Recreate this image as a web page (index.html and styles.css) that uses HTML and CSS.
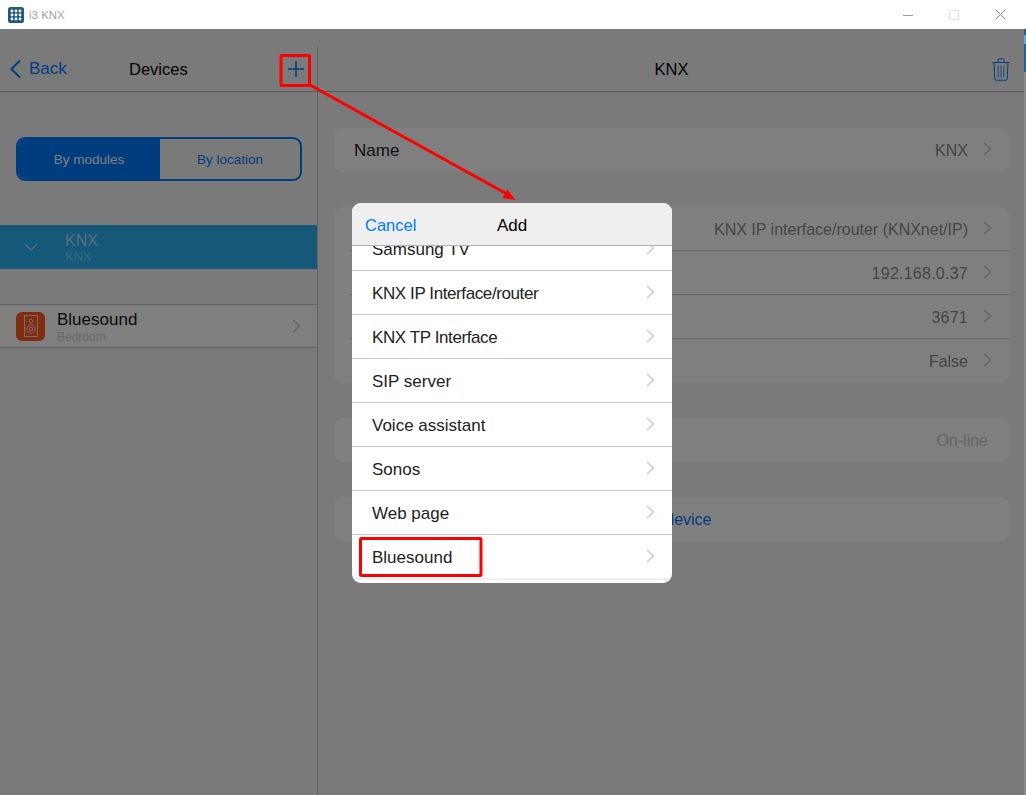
FILE: index.html
```html
<!DOCTYPE html>
<html lang="en">
<head>
<meta charset="utf-8">
<title>i3 KNX</title>
<link rel="stylesheet" href="styles.css">
</head>
<body>
<header class="titlebar">
  <svg class="app-icon" width="16" height="16" viewBox="0 0 16 16"><rect width="16" height="16" rx="2.5" fill="#1f5a86"/><g fill="#fff"><circle cx="4" cy="4" r="1.4"/><circle cx="8" cy="4" r="1.4"/><circle cx="12" cy="4" r="1.4"/><circle cx="4" cy="8" r="1.4"/><circle cx="8" cy="8" r="1.4"/><circle cx="12" cy="8" r="1.4"/><circle cx="4" cy="12" r="1.4"/><circle cx="8" cy="12" r="1.4"/><circle cx="12" cy="12" r="1.4"/></g></svg>
  <span class="app-name">i3 KNX</span>
  <div class="win-controls">
    <svg width="10" height="10" viewBox="0 0 10 10"><path d="M0 5.5H10" stroke="#9a9a9a" stroke-width="1"/></svg>
    <svg width="10" height="10" viewBox="0 0 10 10"><rect x=".5" y=".5" width="9" height="9" fill="none" stroke="#e2e2e2"/></svg>
    <svg width="11" height="11" viewBox="0 0 11 11"><path d="M.5 .5L10.5 10.5M10.5 .5L.5 10.5" stroke="#8a8a8a" stroke-width="1" fill="none"/></svg>
  </div>
</header>

<div class="app">
  <aside class="sidebar">
    <div class="side-head">
      <a class="back"><svg width="13" height="20" viewBox="0 0 13 20"><path d="M11 1.500L2.500 10L11 18.500" fill="none" stroke="#007aff" stroke-width="2"/></svg>Back</a>
      <h2 class="side-title">Devices</h2>
      <svg class="plus" width="16" height="16" viewBox="0 0 16 16"><path d="M8 0V16M0 8H16" stroke="#007aff" stroke-width="1.600"/></svg>
    </div>
    <div class="segment">
      <span class="seg seg-on">By modules</span>
      <span class="seg">By location</span>
    </div>
    <div class="knx-row">
      <svg width="14" height="8" viewBox="0 0 14 8"><path d="M1 1L7 7L13 1" fill="none" stroke="#fff" stroke-opacity=".55" stroke-width="1.400"/></svg>
      <div class="stack">
        <span class="knx-name">KNX</span>
        <span class="knx-sub">KNX</span>
      </div>
    </div>
    <div class="blue-row">
      <span class="tile">
        <svg width="14" height="22" viewBox="0 0 14 22" fill="none" stroke="#fff" stroke-opacity=".75"><rect x=".5" y=".5" width="13" height="21"/><circle cx="7" cy="6" r="1.800"/><circle cx="7" cy="14" r="4.200"/><circle cx="7" cy="14" r="1.800"/></svg>
      </span>
      <div class="stack">
        <span class="blue-name">Bluesound</span>
        <span class="blue-sub">Bedroom</span>
      </div>
      <svg class="chev chev-side" width="9" height="14" viewBox="0 0 9 14"><path d="M1 1L7.500 7L1 13"/></svg>
    </div>
  </aside>

  <main class="detail">
    <div class="detail-head">
      <h2 class="detail-title">KNX</h2>
      <svg class="trash" width="18" height="23" viewBox="0 0 18 23" fill="none" stroke="#007aff" stroke-width="1"><path d="M.5 4.500H17.500M6 4.500V2Q6 .8 7.200 .8H10.800Q12 .8 12 2V4.500M2 4.500L2.800 21Q2.900 22.200 4 22.200H14Q15.100 22.200 15.200 21L16 4.500"/><path d="M6 7.500L6.500 19.500M9 7.500V19.500M12 7.500L11.500 19.500" stroke-width="1.400" stroke-opacity=".55"/></svg>
    </div>
    <section class="card">
      <div class="row"><span>Name</span><span class="val">KNX</span><svg class="chev" width="9" height="14" viewBox="0 0 9 14"><path d="M1 1L7.500 7L1 13"/></svg></div>
    </section>
    <section class="card">
      <div class="row"><span>Type</span><span class="val">KNX IP interface/router (KNXnet/IP)</span><svg class="chev" width="9" height="14" viewBox="0 0 9 14"><path d="M1 1L7.500 7L1 13"/></svg></div>
      <div class="row"><span>IP address</span><span class="val num">192.168.0.37</span><svg class="chev" width="9" height="14" viewBox="0 0 9 14"><path d="M1 1L7.500 7L1 13"/></svg></div>
      <div class="row"><span>Port</span><span class="val num">3671</span><svg class="chev" width="9" height="14" viewBox="0 0 9 14"><path d="M1 1L7.500 7L1 13"/></svg></div>
      <div class="row"><span>NAT mode</span><span class="val">False</span><svg class="chev" width="9" height="14" viewBox="0 0 9 14"><path d="M1 1L7.500 7L1 13"/></svg></div>
    </section>
    <section class="card">
      <div class="row row-status"><span>Status</span><span class="val val-light">On-line</span></div>
    </section>
    <section class="card">
      <div class="row row-action">Test device</div>
    </section>
  </main>
</div>

<div class="scrim"></div>
<div class="window-edge"></div>

<div class="dialog">
  <div class="dialog-head">
    <span class="cancel">Cancel</span>
    <span class="dialog-title">Add</span>
  </div>
  <ul class="list">
    <li class="item"><span>Samsung TV</span><svg class="chev" width="9" height="14" viewBox="0 0 9 14"><path d="M1 1L7.500 7L1 13"/></svg></li>
    <li class="item"><span class="tight">KNX IP Interface/router</span><svg class="chev" width="9" height="14" viewBox="0 0 9 14"><path d="M1 1L7.500 7L1 13"/></svg></li>
    <li class="item"><span class="tight">KNX TP Interface</span><svg class="chev" width="9" height="14" viewBox="0 0 9 14"><path d="M1 1L7.500 7L1 13"/></svg></li>
    <li class="item"><span>SIP server</span><svg class="chev" width="9" height="14" viewBox="0 0 9 14"><path d="M1 1L7.500 7L1 13"/></svg></li>
    <li class="item"><span>Voice assistant</span><svg class="chev" width="9" height="14" viewBox="0 0 9 14"><path d="M1 1L7.500 7L1 13"/></svg></li>
    <li class="item"><span>Sonos</span><svg class="chev" width="9" height="14" viewBox="0 0 9 14"><path d="M1 1L7.500 7L1 13"/></svg></li>
    <li class="item"><span>Web page</span><svg class="chev" width="9" height="14" viewBox="0 0 9 14"><path d="M1 1L7.500 7L1 13"/></svg></li>
    <li class="item"><span>Bluesound</span><svg class="chev" width="9" height="14" viewBox="0 0 9 14"><path d="M1 1L7.500 7L1 13"/></svg></li>
  </ul>
</div>

<svg class="annotations" width="1026" height="795" viewBox="0 0 1026 795">
  <g fill="none" stroke="#f00" stroke-width="3">
    <rect x="281" y="55.500" width="28.500" height="30" rx="1"/>
    <rect x="360.500" y="538.500" width="120.500" height="37" rx="1"/>
    <path d="M310 85L506 193.500"/>
  </g>
  <path d="M515.500 200L502.500 198L507.500 189.500Z" fill="#f00"/>
</svg>
</body>
</html>
```
FILE: styles.css
```css
* { box-sizing: border-box; }
html, body { margin: 0; height: 100%; overflow: hidden; }
body {
  position: relative;
  display: flex;
  flex-direction: column;
  width: 1026px;
  height: 795px;
  font-family: "Liberation Sans", Arial, sans-serif;
  font-size: 17px;
  color: #222;
  background: #f5f5f7;
}
.titlebar {
  position: relative;
  z-index: 3;
  flex: 0 0 29px;
  display: flex;
  align-items: center;
  padding-left: 8px;
  background: #fff;
}
.app-name { margin-left: 5px; font-size: 11.500px; color: #a2a2a6; }
.win-controls {
  margin-left: auto;
  display: flex;
  align-items: center;
  gap: 36px;
  padding-right: 20px;
}
.app { flex: 1; display: flex; min-height: 0; padding-top: 17px; }
.sidebar {
  flex: 0 0 318px;
  position: relative;
  border-right: 1px solid #c8c8c8;
}
.side-head {
  height: 46px;
  display: flex;
  align-items: center;
  position: relative;
  padding-top: 1px;
  border-bottom: 1px solid #b4b4b4;
}
.back {
  margin-left: 9px;
  display: flex;
  align-items: center;
  gap: 7px;
  color: #007aff;
}
.side-title {
  position: absolute;
  left: 129px;
  margin: 0;
  font-size: 16.500px;
  font-weight: 400;
  color: #000;
}
.plus { position: absolute; left: 288px; top: 15px; }
.segment {
  display: flex;
  width: 286px;
  height: 44px;
  margin: 45px 0 0 16px;
  border: 2px solid #007aff;
  border-radius: 9px;
  overflow: hidden;
  font-size: 13.500px;
}
.seg {
  flex: 1;
  display: flex;
  align-items: center;
  justify-content: center;
  color: #007aff;
}
.seg-on { flex: 0 0 142px; color: #fff; background: #007aff; }
.knx-row {
  height: 44px;
  margin-top: 44px;
  display: flex;
  align-items: center;
  gap: 27px;
  padding-left: 24px;
  background: #2ab0f4;
}
.stack { display: flex; flex-direction: column; padding-top: 2px; }
.knx-name { font-size: 16px; line-height: 17px; color: #fff; opacity: .6; }
.knx-sub { font-size: 13px; line-height: 15px; color: #fff; opacity: .35; }
.blue-row {
  margin-top: 35px;
  display: flex;
  align-items: center;
  padding-left: 16px;
  background: #fff;
  border-top: 1px solid #c0c0c0;
  border-bottom: 1px solid #c0c0c0;
  box-sizing: content-box;
  height: 42px;
}
.tile {
  width: 29px;
  height: 29px;
  flex: none;
  display: flex;
  align-items: center;
  justify-content: center;
  border-radius: 6px;
  background: #fc5a26;
  margin-right: 12px;
}
.blue-name { font-size: 17px; line-height: 21px; color: #111; }
.blue-sub { font-size: 12px; line-height: 15px; color: #d0d0d0; }
.chev { flex: none; fill: none; stroke: #c7c7cc; stroke-width: 1.300; }
.chev-side { margin-left: auto; margin-right: 16px; }

.detail { flex: 1; min-width: 0; padding: 0 17px 0 16px; position: relative; }
.detail-head {
  height: 46px;
  margin: 0 -17px 36px -16px;
  display: flex;
  align-items: center;
  justify-content: center;
  padding-top: 1px;
  border-bottom: 1px solid #b4b4b4;
}
.detail-title { margin: 0 0 0 -1px; font-size: 16.500px; font-weight: 400; color: #000; }
.trash { position: absolute; right: 16px; top: 12px; }
.card {
  background: #fff;
  border-radius: 9px;
  margin-bottom: 35px;
  overflow: hidden;
}
.row {
  height: 44px;
  margin-left: 16px;
  display: flex;
  align-items: center;
  gap: 15px;
  padding: 2px 17px 0 4px;
  border-bottom: 1px solid #c8c8c8;
}
.row:last-child { border-bottom: 0; }
.row > :first-child { margin-right: auto; }
.row .chev { margin-top: -4px; }
.val { color: #8a8a8e; font-size: 16px; }
.num { letter-spacing: .25px; }
.val-light { color: #c8c8cc; }
.row-status { padding-right: 21px; }
.row-action { margin-left: 0; padding: 2px 0 0; justify-content: center; color: #007aff; font-size: 16px; }

.scrim {
  position: absolute;
  z-index: 1;
  inset: 29px 0 0 0;
  background: rgba(0, 0, 0, .5);
}
.window-edge {
  position: absolute;
  z-index: 2;
  right: 0;
  top: 29px;
  bottom: 0;
  width: 2px;
  background: linear-gradient(#1f5f9a 0 6px, #4fb4d8 6px 15px, #1f5f9a 15px 43px, #8a8a8a 43px);
}

.dialog {
  position: absolute;
  z-index: 2;
  left: 352px;
  top: 203px;
  width: 320px;
  height: 380px;
  display: flex;
  flex-direction: column;
  border-radius: 9px;
  overflow: hidden;
  background: #fff;
}
.dialog-head {
  flex: 0 0 43px;
  position: relative;
  z-index: 1;
  display: flex;
  align-items: center;
  justify-content: center;
  padding-top: 3px;
  background: #efefef;
  border-bottom: 1px solid #b2b2b2;
  color: #000;
}
.cancel { position: absolute; left: 13px; color: #007aff; font-size: 16.500px; }
.list { list-style: none; margin: -19px 0 0; padding: 0; flex: 1; }
.item {
  height: 44px;
  display: flex;
  align-items: center;
  justify-content: space-between;
  padding: 2px 17px 0 20px;
  border-bottom: 1px solid #c8c8c8;
}
.item .chev { margin-top: -4px; }
.tight { letter-spacing: -.4px; }
.item:last-child { border-bottom-color: #eeeef3; border-bottom-width: 2px; height: 45px; }
.annotations { position: absolute; z-index: 4; left: 0; top: 0; pointer-events: none; }
```
